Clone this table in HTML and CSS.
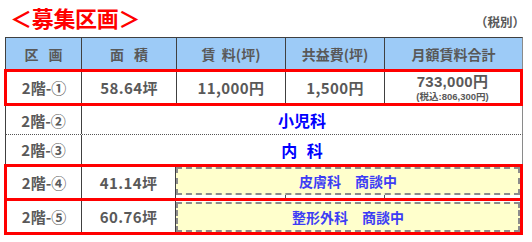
FILE: index.html
```html
<!DOCTYPE html>
<html lang="ja">
<head>
<meta charset="utf-8">
<link rel="stylesheet" href="styles.css">
</head>
<body>
<div class="page">
  <div class="titlebar">
    <h1 class="title">＜募集区画＞</h1>
    <span class="note">（税別）</span>
  </div>
  <div class="table">
    <div class="row head">
      <div class="cell"><span class="wide">区画</span></div>
      <div class="cell"><span class="wide">面積</span></div>
      <div class="cell"><span class="wide2">賃</span>料(坪)</div>
      <div class="cell">共益費(坪)</div>
      <div class="cell">月額賃料合計</div>
    </div>
    <div class="row red r1">
      <div class="cell">2階-①</div>
      <div class="cell num">58.64坪</div>
      <div class="cell num">11,000円</div>
      <div class="cell num">1,500円</div>
      <div class="cell total"><span class="big">733,000円</span><span class="small">(税込:806,300円)</span></div>
    </div>
    <div class="row merged r2">
      <div class="cell">2階-②</div>
      <div class="cell blue">小児科</div>
    </div>
    <div class="row merged r3">
      <div class="cell">2階-③</div>
      <div class="cell blue"><span class="wide">内科</span></div>
    </div>
    <div class="row red nego r4">
      <div class="cell">2階-④</div>
      <div class="cell num">41.14坪</div>
      <div class="cell span"><div class="box">皮膚科　商談中</div></div>
    </div>
    <div class="row red nego r5">
      <div class="cell">2階-⑤</div>
      <div class="cell num">60.76坪</div>
      <div class="cell span"><div class="box">整形外科　商談中</div></div>
    </div>
  </div>
</div>
</body>
</html>
```

FILE: styles.css
```css
html, body {
  margin: 0;
  padding: 0;
  background: #ffffff;
}

body {
  font-family: "Noto Sans CJK JP", "Noto Sans", sans-serif;
  font-weight: 700;
  color: #595959;
}

.page {
  width: 532px;
  height: 242px;
  padding-left: 5px;
  box-sizing: border-box;
}

.titlebar {
  width: 518px;
  height: 37px;
  display: flex;
  justify-content: space-between;
  align-items: flex-end;
  box-sizing: border-box;
  padding-bottom: 8px;
}

.title {
  margin: 0 0 0 5px;
  font-size: 22px;
  line-height: 24px;
  font-weight: 700;
  color: #ff0000;
  letter-spacing: -0.3px;
}

.note {
  font-size: 12.5px;
  line-height: 14px;
  color: #595959;
  margin-right: -2px;
}

.table {
  width: 518px;
}

.row {
  display: grid;
  grid-template-columns: 76px 95px 109px 99px 1fr;
  border-left: 1px solid #404040;
  border-right: 1px solid #8a8a8a;
  box-sizing: border-box;
}

.cell {
  display: flex;
  align-items: center;
  justify-content: center;
  border-right: 1px solid #404040;
  font-size: 15px;
  white-space: nowrap;
}

.num {
  letter-spacing: 0.4px;
}

.wide {
  letter-spacing: 0.7em;
  margin-right: -0.7em;
}

.wide2 {
  margin-right: 0.45em;
}

.row .cell:last-child {
  border-right: none;
}

.head {
  height: 32px;
  border-top: 1px solid #404040;
  background: #9dcbf7;
}

.head .cell {
  font-size: 14px;
}

.red {
  margin-left: -1px;
  width: 519px;
  border: 3px solid #ff0000;
  grid-template-columns: 75px 95px 109px 99px 1fr;
}

.r1 {
  height: 37px;
}

.total {
  flex-direction: column;
}

.big {
  font-family: "Liberation Sans", "Noto Sans CJK JP", sans-serif;
  font-size: 15px;
  line-height: 17px;
  letter-spacing: 0.3px;
}

.small {
  font-family: "Liberation Sans", "Noto Sans CJK JP", sans-serif;
  font-size: 9.5px;
  line-height: 12px;
  margin-top: 1px;
}

.merged {
  grid-template-columns: 76px 1fr;
}

.r2 {
  height: 29px;
  border-bottom: 1px dotted #555555;
}

.r3 {
  height: 29px;
}

.blue {
  color: #0000ff;
  font-size: 16px;
}

.blue .wide {
  letter-spacing: 0.6em;
  margin-right: -0.6em;
}

.nego {
  grid-template-columns: 75px 94px 1fr;
}

.r4 {
  height: 37px;
}

.r5 {
  height: 34px;
  border-top: none;
}

.span {
  align-items: stretch;
  justify-content: stretch;
}

.r4 .span {
  padding-bottom: 3px;
  background:
    linear-gradient(#555555, #555555) 109px 100% / 1px 3px no-repeat,
    linear-gradient(#555555, #555555) 208px 100% / 1px 3px no-repeat;
}

.r5 .span {
  padding-top: 1px;
}

.box {
  flex: 1;
  display: flex;
  align-items: center;
  justify-content: center;
  background: #ffffcc;
  border: 2px dashed #8c8c8c;
  color: #3d3df5;
  font-size: 14px;
}
```
